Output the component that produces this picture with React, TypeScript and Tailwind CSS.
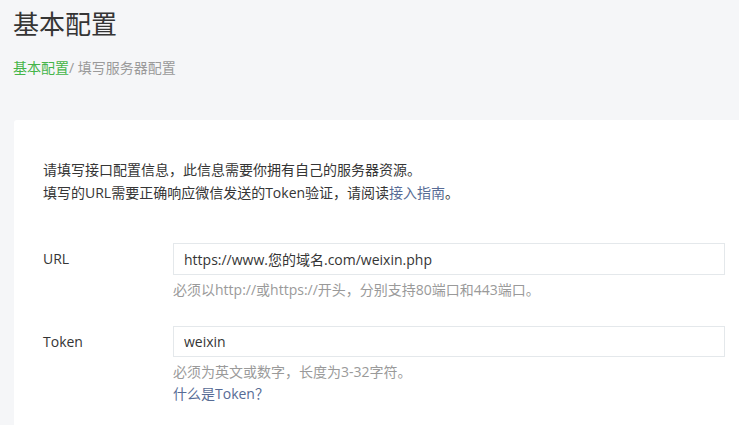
import React from 'react';

const font = { fontFamily: '"Open Sans", "Noto Sans CJK SC", sans-serif' };

const App: React.FC = () => {
  return (
    <div className="min-h-screen bg-[#f5f6f8] pl-[14px] text-[#353535] overflow-hidden font-['Open_Sans','Noto_Sans_CJK_SC',sans-serif]">
      {/* Header */}
      <h1 className="-ml-px pt-[6px] text-[26px] leading-[36px] font-normal text-[#353535]">基本配置</h1>
      <div className="-ml-px mt-[15px] text-[14px] leading-[22px]">
        <a href="#" className="text-[#44b549]">基本配置</a>
        <span className="text-[#9a9a9a]">/ 填写服务器配置</span>
      </div>

      {/* Card */}
      <div className="mt-[41px] bg-white rounded-tl-[3px] pl-[29px] pt-[38px] pb-10 min-h-[320px]">
        <div className="text-[14px] leading-[23px]">
          <p>请填写接口配置信息，此信息需要你拥有自己的服务器资源。</p>
          <p>
            填写的URL需要正确响应微信发送的Token验证，请阅读
            <a href="#" className="text-[#576b95]">接入指南</a>。
          </p>
        </div>

        <div className="mt-[39px] flex flex-col gap-[25px]">
          <div className="flex">
            <label className="w-[130px] shrink-0 text-[14px] leading-[32px]">URL</label>
            <div className="w-[552px]">
              <input
                defaultValue="https://www.您的域名.com/weixin.php"
                className="w-full h-[32px] border border-[#e4e8eb] px-[10px] text-[14px] text-[#353535] outline-none"
                style={font}
              />
              <p className="mt-[4px] text-[14px] leading-[22px] text-[#9a9a9a]">
                必须以http://或https://开头，分别支持80端口和443端口。
              </p>
            </div>
          </div>

          <div className="flex">
            <label className="w-[130px] shrink-0 text-[14px] leading-[32px]">Token</label>
            <div className="w-[552px]">
              <input
                defaultValue="weixin"
                className="w-full h-[31px] border border-[#e4e8eb] px-[10px] text-[14px] text-[#353535] outline-none"
                style={font}
              />
              <p className="mt-[4px] text-[14px] leading-[22px] text-[#9a9a9a]">
                必须为英文或数字，长度为3-32字符。
              </p>
              <a href="#" className="block text-[14px] leading-[22px] text-[#576b95]">什么是Token？</a>
            </div>
          </div>
        </div>
      </div>
    </div>
  );
};

export default App;
